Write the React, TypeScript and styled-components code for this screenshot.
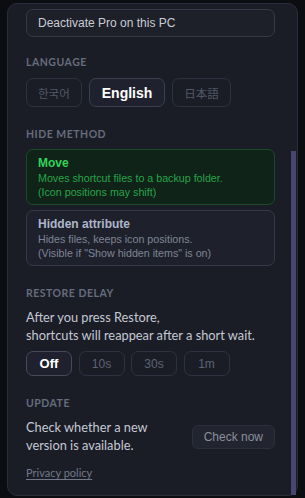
import React, { useLayoutEffect, useRef, useState } from "react";
import styled, { createGlobalStyle } from "styled-components";

const GlobalStyle = createGlobalStyle`
  html, body {
    margin: 0;
    padding: 0;
    background: #0c0d11;
  }
  body {
    font-family: Lato, "Noto Sans", sans-serif;
    -webkit-font-smoothing: antialiased;
  }
  * { box-sizing: border-box; }
`;

const Page = styled.div`
  width: 305px;
  height: 498px;
  padding: 3px 7px 0 7px;
  overflow: hidden;
`;

const Panel = styled.div`
  width: 291px;
  height: 493px;
  border: 1px solid #2a2d3a;
  border-radius: 10px;
  background: #1b1d26;
  display: flex;
`;

const Viewport = styled.div`
  flex: 1;
  min-width: 0;
  overflow-y: auto;
  overflow-x: hidden;
  border-radius: 9px 0 0 9px;
  scrollbar-width: none;
  &::-webkit-scrollbar {
    display: none;
  }
`;

const Track = styled.div`
  width: 6px;
  flex-shrink: 0;
  display: flex;
  flex-direction: column;
  padding-right: 1px;
`;

const Thumb = styled.div`
  width: 5px;
  background: #48466f;
`;

const Content = styled.div`
  padding: 18px 16px 15px 18px;
  display: flex;
  flex-direction: column;
`;

const HeaderRow = styled.div`
  display: flex;
  align-items: center;
  justify-content: space-between;
  height: 40px;
`;

const Title = styled.div`
  font-size: 15px;
  font-weight: 700;
  color: #e4e7ef;
`;

const CloseX = styled.span`
  font-size: 14px;
  color: #6b7181;
`;

const Section = styled.section<{ $gapTop?: number }>`
  display: flex;
  flex-direction: column;
  margin-top: ${(p) => p.$gapTop ?? 20}px;
`;

const Label = styled.div<{ $mb?: number }>`
  font-size: 10.5px;
  line-height: 14px;
  letter-spacing: 0.5px;
  font-weight: 700;
  color: #656c7d;
  text-transform: uppercase;
  margin-bottom: ${(p) => p.$mb ?? 9}px;
`;

const StatusCard = styled.div`
  border: 1px solid #2f3341;
  border-radius: 7px;
  background: #20232d;
  padding: 8px 11px;
  font-family: "Liberation Sans", Arial, sans-serif;
  font-size: 12px;
  color: #aeb4c6;
  line-height: 16px;
`;

const StatusStrong = styled.div`
  font-weight: 700;
  color: #d9dce6;
`;

const WideButton = styled.button`
  width: 100%;
  height: 28px;
  margin-top: 8px;
  border: 1px solid #363a48;
  border-radius: 7px;
  background: #1e2029;
  color: #c9ccd6;
  font-family: "Liberation Sans", Arial, sans-serif;
  font-size: 12px;
  text-align: left;
  padding: 0 11px;
`;

const Row = styled.div<{ $gap: number }>`
  display: flex;
  align-items: center;
  gap: ${(p) => p.$gap}px;
`;

const LangButton = styled.button<{ $active?: boolean; $cjk?: boolean }>`
  height: 29px;
  padding: 0 ${(p) => (p.$active ? 12 : 11)}px;
  border-radius: 7px;
  border: 1px solid ${(p) => (p.$active ? "#3b3f4e" : "#2e3240")};
  background: ${(p) => (p.$active ? "#1f222e" : "transparent")};
  color: ${(p) => (p.$active ? "#ffffff" : "#525867")};
  font-family: ${(p) =>
    p.$cjk
      ? '"Noto Sans CJK KR", "Noto Sans CJK JP", sans-serif'
      : '"Liberation Sans", Arial, sans-serif'};
  font-size: ${(p) => (p.$cjk ? "11.5px" : "14px")};
  font-weight: ${(p) => (p.$active ? 700 : 400)};
`;

const Card = styled.div<{ $selected?: boolean }>`
  border-radius: 7px;
  border: 1px solid ${(p) => (p.$selected ? "#1b4a2b" : "#363a48")};
  background: ${(p) => (p.$selected ? "#0f2318" : "#1e212b")};
  padding: 6px 11px 5px 11px;
  font-family: "Liberation Sans", Arial, sans-serif;
  & + & {
    margin-top: 5px;
  }
`;

const CardTitle = styled.div<{ $selected?: boolean }>`
  font-size: 12px;
  line-height: 15px;
  font-weight: 700;
  color: ${(p) => (p.$selected ? "#31d25a" : "#aeb5ca")};
`;

const CardText = styled.div<{ $selected?: boolean }>`
  font-size: 10.7px;
  line-height: 14px;
  color: ${(p) => (p.$selected ? "#28a34a" : "#7e8496")};
`;

const BodyText = styled.div`
  font-size: 12.8px;
  line-height: 17.5px;
  color: #c4c9d5;
`;

const DelayButton = styled.button<{ $active?: boolean }>`
  height: 25px;
  width: 46px;
  padding: 0;
  border-radius: 7px;
  border: 1px solid ${(p) => (p.$active ? "#464a58" : "#2e3240")};
  background: ${(p) => (p.$active ? "#1f222e" : "transparent")};
  color: ${(p) => (p.$active ? "#ffffff" : "#5d6373")};
  font-family: "Liberation Sans", Arial, sans-serif;
  font-size: ${(p) => (p.$active ? "13px" : "12px")};
  font-weight: ${(p) => (p.$active ? 700 : 400)};
`;

const BodyWrap = styled.div<{ $mb: number }>`
  margin-bottom: ${(p) => p.$mb}px;
`;

const UpdateRow = styled.div`
  display: flex;
  align-items: center;
  justify-content: space-between;
  gap: 12px;
`;

const UpdateText = styled(BodyText)`
  flex: 1;
  max-width: 150px;
`;

const SmallButton = styled.button`
  height: 24px;
  padding: 0 11px;
  border-radius: 6px;
  border: 1px solid #2c303c;
  background: #22252f;
  color: #8a8f9d;
  font-family: "Liberation Sans", Arial, sans-serif;
  font-size: 12px;
  flex-shrink: 0;
`;

const PrivacyLink = styled.a`
  margin-top: 12px;
  font-size: 11px;
  line-height: 14px;
  color: #727889;
  text-decoration: underline;
  text-underline-offset: 2px;
  align-self: flex-start;
`;

export default function App() {
  const ref = useRef<HTMLDivElement>(null);
  const contentRef = useRef<HTMLDivElement>(null);
  const anchorRef = useRef<HTMLButtonElement>(null);
  const [lang] = useState("en");
  const [delay] = useState("off");
  const [thumb, setThumb] = useState({ top: 0, height: 0 });

  useLayoutEffect(() => {
    const el = ref.current;
    if (!el) return;
    const update = () => {
      const a = anchorRef.current;
      if (a) {
        const offset =
          a.getBoundingClientRect().top - el.getBoundingClientRect().top + el.scrollTop;
        el.scrollTop = offset - 3;
      }
      const track = el.clientHeight;
      setThumb({
        top: (el.scrollTop / el.scrollHeight) * track,
        height: (el.clientHeight / el.scrollHeight) * track,
      });
    };
    update();
    let alive = true;
    if (document.fonts && document.fonts.ready) {
      document.fonts.ready.then(() => alive && update());
    }
    const ro = new ResizeObserver(() => update());
    if (contentRef.current) ro.observe(contentRef.current);
    return () => {
      alive = false;
      ro.disconnect();
    };
  }, []);

  const langs = [
    { id: "ko", label: "한국어", cjk: true },
    { id: "en", label: "English", cjk: false },
    { id: "ja", label: "日本語", cjk: true },
  ];
  const delays = [
    { id: "off", label: "Off" },
    { id: "10", label: "10s" },
    { id: "30", label: "30s" },
    { id: "60", label: "1m" },
  ];

  return (
    <>
      <GlobalStyle />
      <Page>
        <Panel>
          <Viewport ref={ref}>
            <Content ref={contentRef}>
              <HeaderRow>
                <Title>Settings</Title>
                <CloseX>✕</CloseX>
              </HeaderRow>

              <Section $gapTop={16}>
                <Label>License</Label>
                <BodyWrap $mb={9}>
                  <BodyText>
                    Pro features are unlocked on up to two PCs with one key.
                  </BodyText>
                </BodyWrap>
                <StatusCard>
                  <StatusStrong>Pro · Activated</StatusStrong>
                  Thank you for supporting the app.
                  <br />
                  Key: XXXX-XXXX-XXXX-7F3A
                </StatusCard>
                <WideButton ref={anchorRef}>Deactivate Pro on this PC</WideButton>
              </Section>

              <Section $gapTop={18}>
                <Label>Language</Label>
                <Row $gap={7}>
                  {langs.map((l) => (
                    <LangButton key={l.id} $active={lang === l.id} $cjk={l.cjk}>
                      {l.label}
                    </LangButton>
                  ))}
                </Row>
              </Section>

              <Section $gapTop={20}>
                <Label $mb={8}>Hide method</Label>
                <Card $selected>
                  <CardTitle $selected>Move</CardTitle>
                  <CardText $selected>Moves shortcut files to a backup folder.</CardText>
                  <CardText $selected>(Icon positions may shift)</CardText>
                </Card>
                <Card>
                  <CardTitle>Hidden attribute</CardTitle>
                  <CardText>Hides files, keeps icon positions.</CardText>
                  <CardText>(Visible if "Show hidden items" is on)</CardText>
                </Card>
              </Section>

              <Section $gapTop={20}>
                <Label>Restore delay</Label>
                <BodyWrap $mb={7}>
                  <BodyText>
                    After you press Restore,
                    <br />
                    shortcuts will reappear after a short wait.
                  </BodyText>
                </BodyWrap>
                <Row $gap={6.5}>
                  {delays.map((d) => (
                    <DelayButton key={d.id} $active={delay === d.id}>
                      {d.label}
                    </DelayButton>
                  ))}
                </Row>
              </Section>

              <Section $gapTop={20}>
                <Label>Update</Label>
                <UpdateRow>
                  <UpdateText>Check whether a new version is available.</UpdateText>
                  <SmallButton>Check now</SmallButton>
                </UpdateRow>
              </Section>

              <PrivacyLink>Privacy policy</PrivacyLink>
            </Content>
          </Viewport>
          <Track>
            <Thumb style={{ marginTop: thumb.top, height: thumb.height }} />
          </Track>
        </Panel>
      </Page>
    </>
  );
}
